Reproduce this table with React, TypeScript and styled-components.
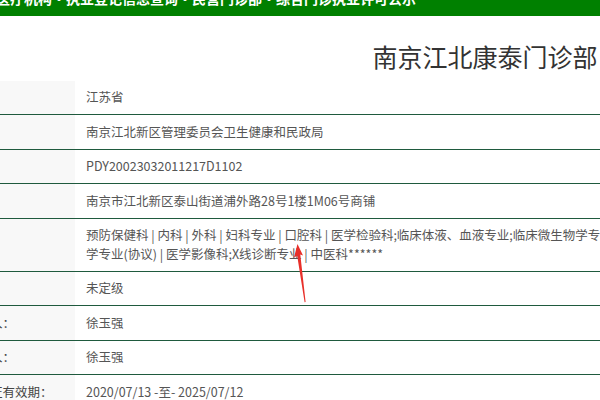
import React from "react";
import styled, { createGlobalStyle } from "styled-components";

const Global = createGlobalStyle`
  html, body { margin: 0; padding: 0; background: #ffffff; }
  body { overflow: hidden; font-family: "Noto Sans CJK SC", "Microsoft YaHei", sans-serif; }
`;

const Page = styled.div`
  position: relative;
  width: 600px;
  height: 400px;
  overflow: hidden;
`;

const Sheet = styled.div`
  width: 1126px;
  margin-left: -78px;
`;

const Banner = styled.div`
  height: 16px;
  background: #008000;
  overflow: hidden;
`;

const BannerText = styled.div`
  margin-top: -9px;
  padding-left: 74px;
  font-size: 14px;
  line-height: 14px;
  font-weight: bold;
  color: #ffffff;
  white-space: nowrap;
`;

const Title = styled.h1`
  margin: 22px 0 6.5px;
  font-size: 25px;
  line-height: 36px;
  font-weight: normal;
  color: #333333;
  text-align: center;
`;

const Table = styled.div`
  display: grid;
  grid-template-columns: 153px 1fr;
`;

const Label = styled.div`
  background: #f8f8f8;
  padding: 7.5px 6px 7.5px 18px;
  font-size: 12.5px;
  line-height: 18.5px;
  color: #444444;
  border-bottom: 1px solid #1f5a3e;
  white-space: nowrap;
  display: flex;
  align-items: center;
`;

const Value = styled.div`
  padding: 7.5px 11px;
  font-size: 12.5px;
  line-height: 18.5px;
  color: #555555;
  border-bottom: 1px solid #1f5a3e;
  white-space: nowrap;
`;

const Arrow = styled.svg`
  position: absolute;
  left: 290px;
  top: 238px;
  width: 20px;
  height: 66px;
`;

const rows: { label: string; value: React.ReactNode }[] = [
  { label: "所在省份：", value: "江苏省" },
  { label: "发证机关：", value: "南京江北新区管理委员会卫生健康和民政局" },
  { label: "登记号：", value: "PDY20023032011217D1102" },
  { label: "地址：", value: "南京市江北新区泰山街道浦外路28号1楼1M06号商铺" },
  {
    label: "诊疗科目：",
    value: (
      <>
        预防保健科 | 内科 | 外科 | 妇科专业 | 口腔科 | 医学检验科;临床体液、血液专业;临床微生物学专业;临床化学检验专业;临床免疫、血清
        <br />
        学专业(协议) | 医学影像科;X线诊断专业 | 中医科******
      </>
    ),
  },
  { label: "医院等级：", value: "未定级" },
  { label: "法定代表人：", value: "徐玉强" },
  { label: "主要负责人：", value: "徐玉强" },
  { label: "执业许可证有效期：", value: "2020/07/13 -至- 2025/07/12" },
];

export default function App() {
  return (
    <Page>
      <Global />
      <Sheet>
        <Banner>
          <BannerText>医疗机构·执业登记信息查询·民营门诊部·综合门诊执业许可公示</BannerText>
        </Banner>
        <Title>南京江北康泰门诊部</Title>
        <Table>
          {rows.map((r, i) => (
            <React.Fragment key={i}>
              <Label>{r.label}</Label>
              <Value>{r.value}</Value>
            </React.Fragment>
          ))}
        </Table>
      </Sheet>
      <Arrow viewBox="0 0 20 66">
        <polygon
          points="7.5,6 13,17.5 10.3,16.5 15.6,64 14.6,64.3 7.2,17.8 4,19.5"
          fill="#e8302a"
        />
      </Arrow>
    </Page>
  );
}
